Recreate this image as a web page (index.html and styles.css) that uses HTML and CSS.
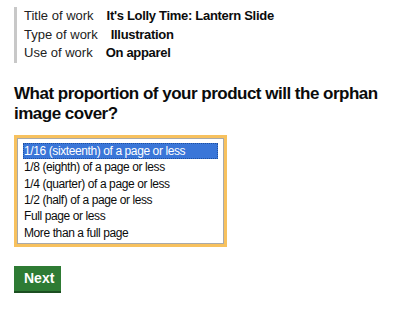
FILE: index.html
```html
<!DOCTYPE html>
<html lang="en">
<head>
<meta charset="utf-8">
<link rel="stylesheet" href="styles.css">
</head>
<body>
<main class="page">
  <div class="summary">
    <div class="row"><span class="label">Title of work</span><span class="value">It's Lolly Time: Lantern Slide</span></div>
    <div class="row"><span class="label">Type of work</span><span class="value">Illustration</span></div>
    <div class="row"><span class="label">Use of work</span><span class="value">On apparel</span></div>
  </div>
  <h1 class="question">What proportion of your product will the orphan image cover?</h1>
  <div class="select-focus">
    <div class="select" role="listbox">
      <div class="option selected" role="option">1/16 (sixteenth) of a page or less</div>
      <div class="option" role="option">1/8 (eighth) of a page or less</div>
      <div class="option" role="option">1/4 (quarter) of a page or less</div>
      <div class="option" role="option">1/2 (half) of a page or less</div>
      <div class="option" role="option">Full page or less</div>
      <div class="option" role="option">More than a full page</div>
    </div>
  </div>
  <button class="button" type="button">Next</button>
</main>
</body>
</html>
```

FILE: styles.css
```css
html, body {
  margin: 0;
  padding: 0;
  background: #ffffff;
}
body {
  font-family: "Liberation Sans", Arial, sans-serif;
  color: #0b0c0c;
}
.page {
  padding: 7px 14px;
  display: flex;
  flex-direction: column;
  align-items: flex-start;
}
.summary {
  border-left: 3px solid #c8c8c8;
  padding-left: 7px;
  display: flex;
  flex-direction: column;
}
.row {
  display: flex;
  gap: 13px;
  font-size: 13px;
  line-height: 18.7px;
}
.label {
  color: #222;
}
.value {
  font-weight: bold;
  letter-spacing: -0.3px;
}
.question {
  margin: 21px 0 11px;
  font-size: 17px;
  line-height: 20px;
  font-weight: bold;
  letter-spacing: -0.5px;
}
.select-focus {
  border: 3px solid #f7c15e;
}
.select {
  border: 1px solid #a9a9a9;
  padding: 4px 5px 2px 5px;
  width: 195px;
  background: #fff;
}
.option {
  font-size: 12px;
  letter-spacing: -0.4px;
  line-height: 16.3px;
  height: 16.3px;
  padding-left: 1px;
  box-sizing: border-box;
  white-space: nowrap;
}
.option.selected {
  background: #3a76d8;
  color: #fff;
  outline: 1px dotted #1f4f9e;
  outline-offset: -1px;
}
.button {
  margin-top: 19px;
  font-family: inherit;
  font-size: 14px;
  font-weight: bold;
  color: #fff;
  background: #2e7b34;
  border: 0;
  box-shadow: 0 2px 0 #1c4f21;
  padding: 0 10px;
  height: 25px;
  line-height: 25px;
  width: 47px;
}
```
